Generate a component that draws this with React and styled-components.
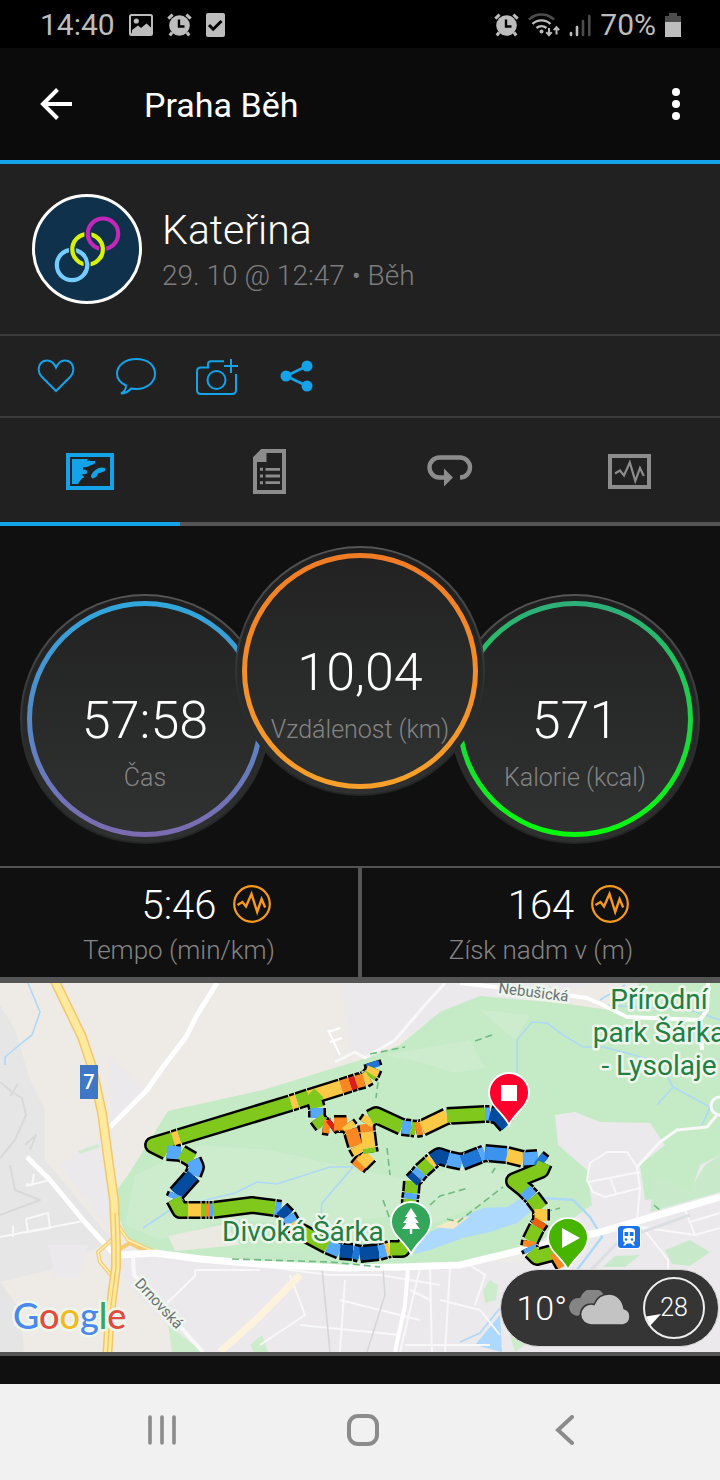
import React from "react";
import styled, { createGlobalStyle, css } from "styled-components";

const BLUE = "#14a2e8";
const GREY = "#8c8c8c";

const GlobalStyle = createGlobalStyle`
  *, *::before, *::after { box-sizing: border-box; }
  body { margin: 0; background: #101010; font-family: Roboto, "Noto Sans", sans-serif; }
  button { font: inherit; color: inherit; background: none; border: 0; padding: 0; cursor: pointer; }
  svg { display: block; }
`;

const Screen = styled.div`
  display: flex;
  flex-direction: column;
  min-height: 100vh;
  background: #101010;
  color: #fff;
`;

const StatusBar = styled.div`
  display: flex;
  align-items: center;
  justify-content: space-between;
  height: 48px;
  padding: 1px 39px 0 40px;
  background: #000;
  color: #bdbdbd;
  font-size: 30px;
  line-height: 48px;
`;

const StatusGroup = styled.div`
  display: flex;
  align-items: center;
  gap: ${(p) => p.$gap}px;
`;

const AppBar = styled.header`
  display: flex;
  align-items: center;
  height: 116px;
  padding: 0 20px 0 32px;
  background: #0b0b0b;
  border-bottom: 4px solid ${BLUE};
`;

const IconButton = styled.button`
  display: grid;
  place-items: center;
  width: 48px;
  height: 48px;
`;

const Title = styled.h1`
  flex: 1;
  margin: 0;
  padding: 2px 0 0 64px;
  font-size: 34px;
  font-weight: 400;
  line-height: 40px;
`;

const Profile = styled.section`
  display: flex;
  align-items: center;
  gap: 20px;
  height: 172px;
  padding: 0 32px;
  background: #212121;
  border-bottom: 2px solid #3a3a3a;
`;

const Avatar = styled.div`
  width: 110px;
  height: 110px;
  overflow: hidden;
  border: 3px solid #fff;
  border-radius: 50%;
  background: #10314b;
`;

const Identity = styled.div`
  padding-top: 6px;
`;

const Name = styled.h2`
  margin: 0;
  font-size: 41px;
  font-weight: 300;
  line-height: 48px;
`;

const Meta = styled.p`
  margin: 0;
  color: #7d7d7d;
  font-size: 28px;
  font-weight: 300;
  line-height: 44px;
`;

const Actions = styled.div`
  display: flex;
  height: 82px;
  padding: 0 16px;
  background: #212121;
  border-bottom: 2px solid #3a3a3a;
  color: ${BLUE};
`;

const ActionButton = styled.button`
  display: grid;
  place-items: center;
  width: 80px;
`;

const Tabs = styled.div`
  display: grid;
  grid-template-columns: repeat(4, 1fr);
  height: 108px;
  background: #212121;
`;

const Tab = styled.button`
  display: grid;
  place-items: center;
  padding-top: 2px;
  border-bottom: 4px solid ${(p) => (p.$active ? BLUE : "#555")};
  color: ${(p) => (p.$active ? BLUE : GREY)};
`;

const Gauges = styled.section`
  display: flex;
  justify-content: center;
  padding: 20px 20px 22px;
`;

const Gauge = styled.div`
  position: relative;
  display: flex;
  flex-direction: column;
  align-items: center;
  flex: none;
  width: 250px;
  height: 250px;
  padding: 7px;
  border-radius: 50%;
  background: linear-gradient(#555, #2c2d2d 60%, #242525);
  ${(p) =>
    p.$raised
      ? css`
          z-index: 1;
          margin: 0 -35px;
        `
      : css`
          margin-top: 48px;
        `}

  &::before {
    content: "";
    position: absolute;
    inset: 2px;
    border-radius: 50%;
    background: linear-gradient(#1f1f1f, #2f3030);
  }
`;

const Ring = styled.div`
  position: relative;
  width: 100%;
  height: 100%;
  padding: 87px 0 0;
  border: 5px solid transparent;
  border-radius: 50%;
  background:
    linear-gradient(#222, #303231) padding-box,
    linear-gradient(${(p) => p.$from}, ${(p) => p.$to}) border-box;
  text-align: center;
  white-space: nowrap;
`;

const GaugeValue = styled.div`
  font-size: 52px;
  font-weight: 300;
  line-height: 56px;
`;

const GaugeLabel = styled.div`
  margin-top: 14px;
  color: #848484;
  font-size: 25px;
  font-weight: 300;
  line-height: 30px;
`;

const Stats = styled.section`
  display: grid;
  grid-template-columns: 1fr 1fr;
  border-top: 2px solid #555;
  border-bottom: 6px solid #555;
`;

const Stat = styled.div`
  height: 109px;
  padding-top: 14px;
  text-align: center;
  border-left: ${(p) => (p.$divided ? "2px solid #555" : "0")};
  border-right: ${(p) => (p.$divided ? "0" : "2px solid #555")};
`;

const StatRow = styled.div`
  display: grid;
  grid-template-columns: 1fr auto 1fr;
  align-items: center;
  gap: 17px;
  font-size: 40px;
  font-weight: 300;
  line-height: 48px;
`;

const StatButton = styled.button`
  grid-column: 3;
  justify-self: start;
  margin-bottom: 4px;
`;

const StatValue = styled.span`
  grid-column: 2;
`;

const StatLabel = styled.div`
  color: #848484;
  font-size: 26px;
  font-weight: 300;
  line-height: 40px;
`;

const MapPanel = styled.section`
  position: relative;
  border-bottom: 4px solid #555;
`;

const MapSvg = styled.svg`
  width: 100%;
  height: auto;
  font-family: Roboto, "Noto Sans", sans-serif;
`;

const WeatherPill = styled.div`
  position: absolute;
  right: 1px;
  bottom: 5px;
  display: flex;
  align-items: center;
  gap: 2px;
  height: 78px;
  padding: 0 13px 0 15px;
  border: 1px solid #d8d8d8;
  border-radius: 39px;
  background: #353535;
  font-size: 34px;
  font-weight: 300;
  line-height: 40px;
`;

const WindDial = styled.div`
  position: relative;
  display: grid;
  place-items: center;
  width: 62px;
  height: 62px;
  margin-left: 9px;
  border: 2px solid #eee;
  border-radius: 50%;
  font-size: 25px;
  line-height: 30px;
`;

const WindArrow = styled.svg`
  position: absolute;
  left: 0;
  bottom: 9px;
`;

const Spacer = styled.div`
  flex: 1;
  min-height: 28px;
`;

const NavBar = styled.nav`
  display: grid;
  grid-template-columns: repeat(3, 1fr);
  height: 96px;
  padding: 0 54px 4px 61px;
  background: #f1f1f1;
  color: #8b8b8b;
`;

const NavButton = styled.button`
  display: grid;
  place-items: center;
`;

const AlarmIcon = () => (
  <svg width="25" height="24" viewBox="0 0 25 24" aria-hidden="true">
    <circle cx="12.500" cy="12.500" r="10.300" fill="currentColor" />
    <path d="M1.300 5.600 5.600 1.600M23.700 5.600 19.400 1.600" stroke="currentColor" strokeWidth="3" />
    <path d="M5 19.500 2.800 22.500M20 19.500 22.200 22.500" stroke="currentColor" strokeWidth="3" />
    <path d="M12 6.500V13.500H17.500" fill="none" stroke="#000" strokeWidth="2.400" />
  </svg>
);

const PictureIcon = () => (
  <svg width="24" height="22" viewBox="0 0 24 22" aria-hidden="true">
    <rect x="1" y="1" width="22" height="20" rx="1.500" fill="none" stroke="currentColor" strokeWidth="2" />
    <circle cx="7.300" cy="7" r="2.600" fill="currentColor" />
    <path d="M3 18v-2l6-4.500 3 2.500 5.500-4.500L22 13.500V20H2z" fill="currentColor" />
  </svg>
);

const TaskIcon = () => (
  <svg width="19" height="24" viewBox="0 0 19 24" aria-hidden="true">
    <rect width="19" height="24" rx="2" fill="currentColor" />
    <path d="m3 12 4.200 4.200L15.500 8" fill="none" stroke="#000" strokeWidth="3" />
  </svg>
);

const WifiIcon = () => (
  <svg width="32" height="24" viewBox="0 0 32 24" fill="none" aria-hidden="true">
    <path d="M1 6.500a18 18 0 0 1 25 0" stroke="#4c4c4c" strokeWidth="2.600" />
    <path d="M4.500 11a13 13 0 0 1 18 0M8.500 15a7.500 7.500 0 0 1 10 0" stroke="currentColor" strokeWidth="2.400" />
    <circle cx="13.500" cy="18.500" r="2" fill="currentColor" />
    <path d="M21 15v7M18.300 19.200l2.700 3 2.700-3M28.500 21.500v-7M25.800 17.200l2.700-3 2.700 3" stroke="currentColor" strokeWidth="2" />
  </svg>
);

const SignalIcon = () => (
  <svg width="22" height="24" viewBox="0 0 22 24" strokeWidth="2.600" strokeLinecap="round" aria-hidden="true">
    <path d="M2 20v2M8 14v8" stroke="currentColor" />
    <path d="M14 8v14M20.300 3v19" stroke="#4c4c4c" />
  </svg>
);

const BatteryIcon = () => (
  <svg width="16" height="24" viewBox="0 0 16 24" aria-hidden="true">
    <path d="M4 3V0h8v3h4v6H0V3z" fill="#4c4c4c" />
    <path d="M0 9h16v15H0z" fill="currentColor" />
  </svg>
);

const AvatarArt = () => {
  const casing = { stroke: "#10314b", strokeWidth: 7 };
  return (
    <svg width="104" height="104" viewBox="3 3 104 104" fill="none" strokeWidth="4.200" aria-hidden="true">
      <circle cx="40" cy="71" r="15.200" stroke="#73cdff" />
      <circle cx="55.500" cy="55.300" r="15.200" {...casing} />
      <circle cx="55.500" cy="55.300" r="15.200" stroke="#d7f205" />
      <circle cx="71" cy="39.700" r="15.200" {...casing} />
      <circle cx="71" cy="39.700" r="15.200" stroke="#c227b8" />
      <path d="M52.500 62.300a15.200 15.200 0 0 1 1.200 15" {...casing} />
      <path d="M50 59.500a15.200 15.200 0 0 1 2 21" stroke="#73cdff" />
      <path d="M68 46.600a15.200 15.200 0 0 1 1.200 15" {...casing} />
      <path d="M65.800 44.100a15.200 15.200 0 0 1 2 20.500" stroke="#d7f205" />
    </svg>
  );
};

const HeartIcon = () => (
  <svg width="38" height="34" viewBox="0 0 38 34" fill="none" stroke="currentColor" strokeWidth="2" aria-hidden="true">
    <path d="M19 32 4.500 17.500C0 12.500 1 4.500 7 2c5-1.600 9.500 1 12 6.500C21.500 3 26 .400 31 2c6 2.500 7 10.500 2.500 15.500z" />
  </svg>
);

const CommentIcon = () => (
  <svg width="40" height="37" viewBox="0 0 40 37" fill="none" stroke="currentColor" strokeWidth="2" aria-hidden="true">
    <path d="M10 27.500C4.500 25 1 21 1 15.800 1 7.500 9 1 20.500 1S39 7.500 39 15.800 31 31 20.500 31c-2 0-3.500-.200-5.500-.500-2.500 3-6 5-10 5 4-2 5-4.500 5-8z" />
  </svg>
);

const CameraIcon = () => (
  <svg width="43" height="37" viewBox="-1 0 43 37" fill="none" stroke="currentColor" strokeWidth="2" aria-hidden="true">
    <path d="M28 3.200H15q-3 0-3 3.200v3.100H5q-4 0-4 4V32q0 4 4 4h31q4 0 4-4V16" />
    <circle cx="20.500" cy="22" r="9" />
    <path d="M28 8h14M35 1v14" />
  </svg>
);

const ShareIcon = () => (
  <svg width="34" height="32" viewBox="-1 0 34 32" aria-hidden="true">
    <path d="M27 6 6 16l21 10" fill="none" stroke="currentColor" strokeWidth="2.600" />
    <circle cx="6" cy="16" r="5.500" fill="currentColor" />
    <circle cx="27" cy="6" r="5.500" fill="currentColor" />
    <circle cx="27" cy="26" r="5.500" fill="currentColor" />
  </svg>
);

const MapTabIcon = () => (
  <svg width="48" height="37" viewBox="0 0 48 37" aria-hidden="true">
    <rect x="2" y="2" width="44" height="33" fill="none" stroke="currentColor" strokeWidth="4" />
    <path
      d="M6 6h16l-1 2q2-1 4 0l4 0q1 2-1 3l-6 2.500q-2 1-5 .500l0 3q3-1 4 1t-1 3q-3 0-5 1 3 0 3 2.500-3 .500-4 3.500-1 1-2 3H6z"
      fill="currentColor"
    />
    <path d="M39 15q1 3-1 3.500l-6 2q-1 4-5 5-3-1-1.500-4t4.500-5q4-3 9-1.500z" fill="currentColor" />
  </svg>
);

const DetailsTabIcon = () => (
  <svg width="34" height="45" viewBox="0 0 34 45" aria-hidden="true">
    <path d="M2 43V9l7-7h22v41z" fill="none" stroke="currentColor" strokeWidth="4" />
    <path d="M1 9.500 10 .500h3.500V13H1z" fill="currentColor" />
    <path d="M12.500 20.300H27M12.500 27H27M12.500 33.700H27" stroke="currentColor" strokeWidth="2.800" />
    <path d="M7 20.300h3M7 27h3M7 33.700h3" stroke="currentColor" strokeWidth="3" />
  </svg>
);

const LapsTabIcon = () => (
  <svg width="46" height="32" viewBox="0 0 46 32" aria-hidden="true">
    <path d="M33 22.500a10 10 0 0 0 0-20H12.500a10 10 0 0 0 0 20H18" fill="none" stroke="currentColor" strokeWidth="4.400" />
    <path d="M17 13.500 26 22.500 17 31.500z" fill="currentColor" />
  </svg>
);

const ChartTabIcon = () => (
  <svg width="44" height="35" viewBox="0 0 44 35" fill="none" stroke="currentColor" aria-hidden="true">
    <path d="M2 2h39v31H2z" strokeWidth="4" />
    <path d="m7 19.500 5-3 4 5L21.800 8.500 27.300 27 32 14l3.800 8" strokeWidth="2.200" />
  </svg>
);

const PulseIcon = () => (
  <svg width="38" height="38" viewBox="0 0 38 38" fill="none" stroke="#f79a1c" aria-hidden="true">
    <circle cx="19" cy="19" r="17.800" strokeWidth="2.200" />
    <path d="m4.500 20 5-3 3.500 4.500L18.500 9 24.200 27 28.600 14l3.600 8.500" strokeWidth="2.400" />
  </svg>
);

const CloudIcon = () => (
  <svg width="63" height="36" viewBox="0 0 63 36" aria-hidden="true">
    <path d="M9 26a9 9 0 1 1 2-17.800A13.500 13.500 0 0 1 37 9L16 20z" fill="#858585" />
    <path
      d="M22 35a10.500 10.500 0 0 1 0-21 5 5 0 0 1 3 .500C28 7 34 4 40 4c8 0 14 6 15 14.500A8.500 8.500 0 0 1 54 35z"
      fill="#c3c3c3"
      stroke="#353535"
      strokeWidth="1.600"
    />
  </svg>
);

/* Pace colours of the track */
const G = "#80c91c";
const B = "#56a8fb";
const M = "#1f76d6";
const D = "#034c9f";
const Y = "#fbc946";
const O = "#f98722";
const E = "#e8600c";
const R = "#d81f1b";

const track = [
  [M, [[372, 1062], [374, 1068]]],
  [Y, [[374, 1068], [371, 1075]]],
  [G, [[371, 1074], [369, 1077]]],
  [Y, [[369, 1077], [364, 1080]]],
  [O, [[364, 1080], [356, 1082]]],
  [R, [[356, 1082], [350, 1084]]],
  [O, [[350, 1084], [341, 1087]]],
  [Y, [[341, 1087], [309, 1097]]],
  [G, [[309, 1097], [297, 1101]]],
  [Y, [[297, 1101], [291, 1103]]],
  [G, [[291, 1103], [179, 1137]]],
  [Y, [[179, 1137], [173, 1139]]],
  [G, [[173, 1139], [153, 1145], [167, 1152]]],
  [B, [[167, 1152], [181, 1153]]],
  [G, [[181, 1153], [193, 1160]]],
  [B, [[193, 1160], [196, 1167], [193, 1175]]],
  [D, [[193, 1175], [176, 1194]]],
  [B, [[176, 1194], [174, 1199]]],
  [G, [[174, 1199], [180, 1210], [188, 1210]]],
  [Y, [[188, 1210], [201, 1210]]],
  [G, [[201, 1210], [206, 1210]]],
  [O, [[206, 1210], [209, 1210]]],
  [B, [[209, 1210], [213, 1210]]],
  [G, [[213, 1210], [252, 1205], [275, 1208]]],
  [B, [[275, 1208], [281, 1209]]],
  [D, [[281, 1209], [288, 1216]]],
  [B, [[288, 1216], [292, 1223]]],
  [Y, [[292, 1223], [296, 1229]]],
  [G, [[296, 1229], [328, 1246]]],
  [B, [[328, 1246], [340, 1251]]],
  [D, [[340, 1251], [353, 1252]]],
  [M, [[353, 1252], [360, 1254]]],
  [D, [[360, 1254], [379, 1252]]],
  [B, [[379, 1252], [386, 1250]]],
  [Y, [[386, 1250], [390, 1249]]],
  [G, [[390, 1249], [402, 1249], [409, 1240]]],
  [G, [[409, 1222], [410, 1199]]],
  [B, [[410, 1199], [411, 1193]]],
  [G, [[411, 1193], [412, 1181]]],
  [D, [[412, 1181], [417, 1176]]],
  [B, [[417, 1176], [421, 1171]]],
  [G, [[421, 1171], [430, 1163]]],
  [Y, [[430, 1163], [433, 1160]]],
  [D, [[433, 1160], [439, 1156], [448, 1159]]],
  [B, [[448, 1159], [462, 1162]]],
  [M, [[462, 1162], [480, 1155]]],
  [B, [[480, 1155], [485, 1153]]],
  ["#3c93ee", [[485, 1153], [507, 1155]]],
  [Y, [[507, 1155], [523, 1159]]],
  [B, [[523, 1159], [538, 1158]]],
  [M, [[538, 1158], [544, 1163]]],
  [G, [[544, 1163], [541, 1170], [514, 1181], [529, 1193]]],
  [B, [[525, 1190], [532, 1197]]],
  [G, [[532, 1197], [541, 1209]]],
  [Y, [[541, 1209], [541, 1221]]],
  [E, [[541, 1221], [537, 1227]]],
  [G, [[537, 1227], [530, 1241]]],
  [O, [[530, 1241], [529, 1247]]],
  [B, [[529, 1247], [531, 1251]]],
  [G, [[531, 1251], [537, 1257], [556, 1252]]],
  [O, [[556, 1252], [564, 1266]]],
  [G, [[319, 1093], [314, 1098], [317, 1108]]],
  [B, [[317, 1108], [317, 1118]]],
  [G, [[317, 1118], [323, 1126]]],
  [O, [[323, 1126], [330, 1127]]],
  [R, [[330, 1127], [334, 1124]]],
  [O, [[334, 1124], [347, 1124]]],
  [Y, [[347, 1124], [351, 1129]]],
  [O, [[351, 1129], [356, 1146]]],
  [Y, [[356, 1146], [360, 1153]]],
  [O, [[364, 1159], [357, 1168]]],
  [Y, [[361, 1164], [370, 1155]]],
  [G, [[370, 1153], [369, 1148]]],
  [Y, [[369, 1148], [367, 1132]]],
  [O, [[367, 1132], [366, 1124]]],
  [Y, [[366, 1124], [370, 1118]]],
  [G, [[370, 1118], [376, 1115], [402, 1127]]],
  [B, [[402, 1127], [411, 1128]]],
  [G, [[411, 1128], [416, 1129]]],
  [O, [[416, 1129], [422, 1128]]],
  [Y, [[422, 1128], [447, 1116]]],
  [G, [[447, 1116], [485, 1114]]],
  [B, [[485, 1114], [490, 1114]]],
  [D, [[490, 1114], [498, 1116], [507, 1126]]],
];

const toPath = (points) => "M" + points.map((p) => p.join(" ")).join("L");

const tick = (points) => {
  const [ax, ay] = points[points.length - 2];
  const [bx, by] = points[points.length - 1];
  const length = Math.hypot(bx - ax, by - ay) || 1;
  const nx = (-(by - ay) / length) * 10;
  const ny = ((bx - ax) / length) * 10;
  return `M${bx + nx} ${by + ny}L${bx - nx} ${by - ny}`;
};

const Track = ({ segments }) => (
  <g fill="none" strokeLinejoin="round">
    {segments.map(([, points], i) => (
      <path key={i} d={toPath(points)} stroke="#000" strokeWidth="18" />
    ))}
    {segments.map(([, points], i) => (
      <path key={i} d={tick(points)} stroke="#e4f2e0" strokeWidth="1" />
    ))}
    {segments.map(([color, points], i) => (
      <path key={i} d={toPath(points)} stroke={color} strokeWidth="13" />
    ))}
  </g>
);

const Pin = ({ x, y, color, children }) => (
  <g transform={`translate(${x} ${y})`}>
    <path
      d="M0 32C-5 20-20 13-20 0a20 20 0 0 1 40 0C20 13 5 20 0 32z"
      fill={color}
      stroke="#fff"
      strokeWidth="1.800"
    />
    {children}
  </g>
);

const halo = { stroke: "#eef6ec", strokeWidth: 5, strokeLinejoin: "round", paintOrder: "stroke" };

const RouteMap = () => (
  <MapSvg viewBox="0 983 720 369" role="img" aria-label="Divoká Šárka">
    <rect y="983" width="720" height="369" fill="#eeebe6" />

    {/* built-up land */}
    <path d="M0 1005 15 1030 30 1080 45 1110 45 1160 112 1240 50 1270 0 1282z" fill="#e6e6e6" />
    <path d="M110 1058 145 1090 112 1125z M60 1165 112 1130 114 1235z M48 1245h40l-10 33H55z" fill="#ebe9ec" />
    <path d="M0 1282 20 1310 24 1352H0z" fill="#e5e5e5" />
    <path d="M120 1255 720 1265V1352H190L120 1275z" fill="#ebe9ec" />
    <path d="M340 983H600L440 1015 370 1057 350 1050z" fill="#ebe9ec" />

    {/* woods and meadows */}
    <path
      d="M168 1111 263 1090 370 1057 400 1045 440 1012 480 996 560 1003 610 1010 640 983H720V1200L600 1234 530 1250 460 1262 400 1265 330 1266 250 1261 170 1252 150 1252 127 1238 118 1215 117 1190 130 1172 150 1140z"
      fill="#c5eac6"
    />
    <path d="M135 1175 200 1145 270 1150 360 1170 410 1180 400 1215 320 1225 230 1220 160 1240 125 1225z" fill="#cdebcd" />
    <path d="M385 1055 470 1040 485 1068 455 1073 420 1062z M480 1010 530 1015 515 1040z M380 1185 470 1165 520 1175 480 1205 430 1225z" fill="#cdebcd" />
    <path d="M168 1236 225 1224 240 1245 175 1251z" fill="#eae9e2" />
    <path d="M232 1251h70v9h-70z" fill="#c5e8c6" />
    <path d="M78 1151 98 1144 100 1147 80 1154z" fill="#d0ead0" />
    <path
      d="M555 1115 575 1112 600 1122 650 1123 665 1145 640 1165 645 1200 690 1195 700 1165 720 1155V1352H440L440 1268 520 1262 545 1238 592 1205 587 1170 558 1145z"
      fill="#ebe9ec"
    />
    <path d="M655 1178 690 1190 705 1165 720 1155V1192L650 1212z" fill="#c9eaca" />
    <path d="M603 1267 615 1256 640 1255 625 1267z M665 1250 690 1240 710 1252 690 1266 672 1264z" fill="#c9eaca" />
    <path d="M168 1325 203 1352H172z M250 1345 262 1335 268 1352H254z M483 1290 490 1280 498 1285 496 1300 485 1303z M510 1335 525 1345 515 1352z" fill="#cdeccc" />
    <path d="M475 1345 500 1315 502 1352z" fill="#add9ff" />

    {/* water */}
    <path
      d="M418 1243 430 1232 470 1214 483 1208 507 1207 523 1197 534 1200 530 1212 517 1223 490 1232 463 1238 430 1250 414 1254z"
      fill="#add9ff"
    />
    <path d="M435 1227 452 1220 470 1216 453 1229z" fill="#f5e8c4" />
    <g fill="none" stroke="#add9f6" strokeWidth="1.600">
      <path d="M28 983 40 1012 32 1035 23 1042 5 1057V1065" />
      <path d="M143 1228 173 1208 235 1193 257 1182 277 1184 330 1167H353L322 1203 321 1217" />
      <path d="M517 1085V1040L532 1022 547 1023 563 1035 583 1047 603 1047 627 1053 660 1063 673 1087 657 1105" />
      <path d="M673 1087 710 1107 702 1125M600 1000 625 985M600 1005 690 1010 720 1020" />
      <path d="M542 1198 573 1200 590 1217 602 1237 577 1270" strokeWidth="2.400" />
      <path d="M460 1342 480 1333 500 1308M400 1130 385 1120" />
    </g>

    {/* minor roads */}
    <g fill="none" stroke="#f8f8f8" strokeWidth="2" strokeLinejoin="round">
      <path d="M0 1082 12 1092 22 1098 26 1115 15 1140 0 1158M10 1096 18 1084M30 1150 36 1135 25 1145" stroke="#d9d9d9" />
      <path d="M0 1215 40 1200 15 1190 10 1165" stroke="#d9d9d9" />
      <path d="M0 1237 83 1221M26 1219 48 1213 50 1228 28 1232zM13 1226V1237M26 1184 32 1185 34 1174M26 1186 50 1180" />
      <path d="M133 1257 134 1275 203 1352" strokeWidth="4" />
      <path d="M260 1270H195V1276L167 1303M260 1266 330 1275 380 1275 440 1285" />
      <path d="M335 1062 355 1052 365 1058 395 1040 425 1005 445 983" strokeWidth="3" />
      <path d="M328 1030 340 1055M330 1042 342 1038M328 1032 340 1028" stroke="#fff" />
      <path d="M627 1152 607 1152 590 1163 587 1180 593 1192 605 1197 640 1188 637 1167zM588 1182 640 1172M610 1178 616 1193" />
      <path d="M637 1167 660 1142 677 1130 707 1127 717 1115" strokeWidth="3" />
      <path d="M640 1188 637 1220M642 1227 668 1260V1275M685 1210 695 1235 720 1228M690 1222 720 1213M695 1235 640 1227" />
      <path d="M430 1268 432 1352M440 1300 480 1310 500 1335M470 1265 485 1275 475 1305M410 1290 430 1300M290 1275 305 1315 260 1345M340 1300 420 1320M345 1280 340 1352M420 1268 400 1352M300 1325 400 1335M450 1268 445 1352M405 1345 490 1345" />
      <circle cx="720" cy="1106" r="9" strokeWidth="3" />
    </g>
    <path d="M322 1268 330 1352M383 1268 385 1295 367 1352" fill="none" stroke="#d4d6d9" strokeWidth="1.600" />
    <path d="M591 1270 620 1240 642 1232 690 1215" fill="none" stroke="#dcdfe2" strokeWidth="3" />
    <path d="M395 1352 405 1305 408 1268" fill="none" stroke="#fff" strokeWidth="4" />
    <path d="M220 1352 258 1318 300 1275" fill="none" stroke="#fdf3dd" strokeWidth="7" />

    {/* main roads */}
    <g fill="none" stroke="#fff" strokeLinejoin="round">
      <path d="M217 983 197 1015 186 1037 163 1067 147 1090 110 1127" strokeWidth="5" />
      <path d="M27 1157 50 1180 83 1220 112 1252" strokeWidth="5" />
      <path d="M460 983 560 994 587 998 603 1005 627 1017 700 1020 707 1010 708 983M700 1020 702 1050" strokeWidth="4" />
    </g>
    <g fill="none" stroke="#f6cb74" strokeWidth="4" strokeLinejoin="round">
      <path d="M114 1238 98 1252 100 1262 111 1275M118 1225 128 1240 155 1252M118 1250 130 1243 145 1251" />
      <path d="M114 1238 98 1252 100 1262 111 1275M118 1225 128 1240 155 1252" stroke="#fff0b5" strokeWidth="1.600" />
    </g>
    <path
      d="M120 1255 155 1253 200 1259 260 1264 340 1268 400 1267 460 1265 530 1248 600 1232 720 1197"
      fill="none"
      stroke="#fff"
      strokeWidth="7"
    />
    <g fill="none" strokeLinejoin="round">
      <path d="M52 975 68 1008 82 1037 92 1067 102 1113 108 1157 114 1200 116 1243 116 1267 110 1313 107 1360" stroke="#f4c66a" strokeWidth="10" />
      <path d="M52 975 68 1008 82 1037 92 1067 102 1113 108 1157 114 1200 116 1243 116 1267 110 1313 107 1360" stroke="#fdea9e" strokeWidth="7" />
      <path d="M115 1213 116 1243 116 1267 110 1313 107 1360" stroke="#f4c66a" strokeWidth="1.400" />
    </g>

    {/* footpaths */}
    <g fill="none" stroke="#6fbb83" strokeWidth="1.600" strokeDasharray="7 4">
      <path d="M370 1054 405 1047M378 1082 376 1098M387 1148 390 1175M383 1200 392 1225M430 1205 440 1196 468 1188M447 1219 458 1222 503 1187M232 1259 330 1262 380 1267M475 1041 492 1035M545 1212 560 1208M495 1168 492 1173M654 1205 662 1212" />
    </g>

    <Track segments={track} />

    {/* map labels */}
    <g fill="#217f43" {...halo}>
      <text x="222" y="1241" fontSize="28">Divoká Šárka</text>
      <g fontSize="28" textAnchor="middle">
        <text x="659" y="1009">Přírodní</text>
        <text x="659" y="1042">park Šárka</text>
        <text x="659" y="1075">- Lysolaje</text>
      </g>
    </g>
    <g fill="#6b7178" fontSize="15" {...halo}>
      <text transform="translate(498 993) rotate(7)">Nebušická</text>
      <text transform="translate(134 1284) rotate(47)">Drnovská</text>
    </g>

    <rect x="80" y="1065" width="18" height="34" fill="#3f77c4" />
    <text x="89" y="1089" fontSize="20" fontWeight="500" textAnchor="middle" fill="#fff">7</text>

    <g transform="translate(618 1226)">
      <rect x="-1" y="-1" width="24" height="24" rx="4" fill="#fff" />
      <rect width="22" height="22" rx="3" fill="#1a73e8" />
      <path d="M5 5q0-3 6-3t6 3v9q0 2-2 2.500l2 3h-2l-2-2H9l-2 2H5l2-3q-2-.500-2-2.500z" fill="#fff" />
      <path d="M6.500 6h3.700v4H6.500zM11.800 6h3.700v4h-3.700z" fill="#1a73e8" />
      <circle cx="8" cy="13.500" r="1.200" fill="#1a73e8" />
      <circle cx="14" cy="13.500" r="1.200" fill="#1a73e8" />
    </g>

    <Pin x={411} y={1222} color="#34a65a">
      <path d="M0-14 6-5H3.500L8 1H4.500L9 7H1.200V12H-1.200V7H-9L-4.500 1H-8L-3.500-5H-6z" fill="#fff" />
    </Pin>
    <Pin x={509} y={1093} color="#ff002c">
      <path d="M-8-8H8V8H-8z" fill="#fff" />
    </Pin>
    <Pin x={568} y={1238} color="#47b500">
      <path d="M-6-10 12 0-6 10z" fill="#fff" />
    </Pin>

    <text x="13" y="1329" fontFamily="Lato, Roboto, sans-serif" fontSize="36" fontWeight="500" {...halo}>
      <tspan fill="#4a87ee">G</tspan>
      <tspan fill="#df4b3e">o</tspan>
      <tspan fill="#f4b91c">o</tspan>
      <tspan fill="#4a87ee">g</tspan>
      <tspan fill="#3ba55a">l</tspan>
      <tspan fill="#df4b3e">e</tspan>
    </text>
  </MapSvg>
);

const gauges = [
  { value: "57:58", label: "Čas", from: "#30a7dc", to: "#7d6ab0" },
  { value: "10,04", label: "Vzdálenost (km)", from: "#f07c26", to: "#f6a02a", raised: true },
  { value: "571", label: "Kalorie (kcal)", from: "#2fae7c", to: "#08fa0c" },
];

const stats = [
  { value: "5:46", label: "Tempo (min/km)" },
  { value: "164", label: "Získ nadm v (m)" },
];

const actions = [
  { name: "To se mi líbí", Icon: HeartIcon },
  { name: "Komentář", Icon: CommentIcon },
  { name: "Přidat fotku", Icon: CameraIcon },
  { name: "Sdílet", Icon: ShareIcon },
];

const tabs = [
  { name: "Mapa", Icon: MapTabIcon },
  { name: "Podrobnosti", Icon: DetailsTabIcon },
  { name: "Kola", Icon: LapsTabIcon },
  { name: "Grafy", Icon: ChartTabIcon },
];

export default function App() {
  return (
    <Screen>
      <GlobalStyle />
      <StatusBar>
        <StatusGroup $gap={14}>
          <span>14:40</span>
          <PictureIcon />
          <AlarmIcon />
          <TaskIcon />
        </StatusGroup>
        <StatusGroup $gap={9}>
          <AlarmIcon />
          <WifiIcon />
          <SignalIcon />
          <span>70%</span>
          <BatteryIcon />
        </StatusGroup>
      </StatusBar>

      <AppBar>
        <IconButton aria-label="Zpět">
          <svg width="32" height="32" viewBox="0 0 32 32" fill="none" stroke="#fff" strokeWidth="4">
            <path d="M17.500 1.500 3 16l14.500 14.500M3 16h29" />
          </svg>
        </IconButton>
        <Title>Praha Běh</Title>
        <IconButton aria-label="Další možnosti">
          <svg width="8" height="32" viewBox="0 0 8 32" fill="#fff">
            <circle cx="4" cy="4" r="4" />
            <circle cx="4" cy="16" r="4" />
            <circle cx="4" cy="28" r="4" />
          </svg>
        </IconButton>
      </AppBar>

      <Profile>
        <Avatar>
          <AvatarArt />
        </Avatar>
        <Identity>
          <Name>Kateřina</Name>
          <Meta>29. 10 @ 12:47 • Běh</Meta>
        </Identity>
      </Profile>

      <Actions>
        {actions.map(({ name, Icon }) => (
          <ActionButton key={name} aria-label={name}>
            <Icon />
          </ActionButton>
        ))}
      </Actions>

      <Tabs role="tablist">
        {tabs.map(({ name, Icon }, i) => (
          <Tab key={name} role="tab" aria-label={name} aria-selected={i === 0} $active={i === 0}>
            <Icon />
          </Tab>
        ))}
      </Tabs>

      <Gauges>
        {gauges.map((g) => (
          <Gauge key={g.label} $raised={g.raised}>
            <Ring $from={g.from} $to={g.to}>
              <GaugeValue>{g.value}</GaugeValue>
              <GaugeLabel>{g.label}</GaugeLabel>
            </Ring>
          </Gauge>
        ))}
      </Gauges>

      <Stats>
        {stats.map((s, i) => (
          <Stat key={s.label} $divided={i > 0}>
            <StatRow>
              <StatValue>{s.value}</StatValue>
              <StatButton aria-label={`Graf: ${s.label}`}>
                <PulseIcon />
              </StatButton>
            </StatRow>
            <StatLabel>{s.label}</StatLabel>
          </Stat>
        ))}
      </Stats>

      <MapPanel>
        <RouteMap />
        <WeatherPill>
          <span>10°</span>
          <CloudIcon />
          <WindDial>
            28
            <WindArrow width="18" height="14" viewBox="0 0 18 14" aria-hidden="true">
              <path d="M1 2.500 16 0 5 12z" fill="#fff" />
            </WindArrow>
          </WindDial>
        </WeatherPill>
      </MapPanel>

      <Spacer />

      <NavBar>
        <NavButton aria-label="Poslední aplikace">
          <svg width="28" height="30" viewBox="0 0 28 30" stroke="currentColor" strokeWidth="3.600" strokeLinecap="round">
            <path d="M2 2v26M14 2v26M26 2v26" />
          </svg>
        </NavButton>
        <NavButton aria-label="Domů">
          <svg width="32" height="32" viewBox="0 0 32 32" fill="none" stroke="currentColor" strokeWidth="4">
            <rect x="2" y="2" width="28" height="28" rx="9" />
          </svg>
        </NavButton>
        <NavButton aria-label="Zpět v systému">
          <svg width="20" height="30" viewBox="0 0 20 30" fill="none" stroke="currentColor" strokeWidth="4" strokeLinecap="round">
            <path d="M17 2 3 15l14 13" />
          </svg>
        </NavButton>
      </NavBar>
    </Screen>
  );
}
